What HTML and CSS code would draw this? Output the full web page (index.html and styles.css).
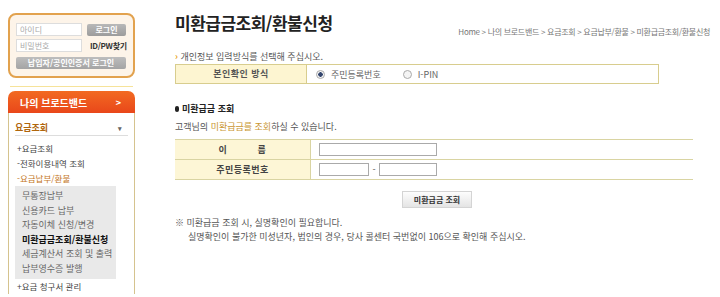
FILE: index.html
```html
<!DOCTYPE html>
<html lang="ko">
<head>
  <meta charset="UTF-8">
  <title>미환급금조회/환불신청</title>
  <link rel="stylesheet" href="styles.css">
</head>
<body>
  <div class="wrap">
    <!-- Left side -->
    <div class="side">
      <div class="login-box">
        <div class="login-row">
          <span class="login-input">아이디</span>
          <span class="login-btn">로그인</span>
        </div>
        <div class="login-row">
          <span class="login-input">비밀번호</span>
          <span class="login-find">ID/PW찾기</span>
        </div>
        <div class="login-cert">납입자/공인인증서 로그인</div>
      </div>
      <div class="side-line"></div>

      <div class="menu-head">
        <span>나의 브로드밴드</span>
        <span class="menu-arrow">&gt;</span>
      </div>
      <div class="menu-panel">
        <div class="menu-title">
          <span>요금조회</span>
          <span class="menu-caret">▾</span>
        </div>
        <ul class="menu-list first">
          <li>+요금조회</li>
          <li>-전화이용내역 조회</li>
          <li class="open">-요금납부/환불</li>
        </ul>
        <ul class="sub-list">
          <li>무통장납부</li>
          <li>신용카드 납부</li>
          <li>자동이체 신청/변경</li>
          <li class="current">미환급금조회/환불신청</li>
          <li>세금계산서 조회 및 출력</li>
          <li>납부영수증 발행</li>
        </ul>
        <ul class="menu-list">
          <li>+요금 청구서 관리</li>
        </ul>
      </div>
    </div>

    <!-- Main content -->
    <div class="main">
      <div class="page-head">
        <h1>미환급금조회/환불신청</h1>
        <div class="crumb">Home &gt; 나의 브로드밴드 &gt; 요금조회 &gt; 요금납부/환불 &gt; 미환급금조회/환불신청</div>
      </div>

      <p class="guide"><span class="guide-mark">›</span> 개인정보 입력방식를 선택해 주십시오.</p>
      <div class="method-box">
        <div class="method-label">본인확인 방식</div>
        <div class="method-opts">
          <span class="radio checked"></span><span class="opt-text">주민등록번호</span>
          <span class="radio"></span><span class="opt-text">I-PIN</span>
        </div>
      </div>

      <h2 class="sec-title"><span class="sec-mark"></span>미환급금 조회</h2>
      <p class="desc">고객님의 <span class="hl">미환급금를 조회</span>하실 수 있습니다.</p>

      <div class="form-table">
        <div class="form-row">
          <div class="form-label">이&nbsp;&nbsp;&nbsp;&nbsp;&nbsp;&nbsp;&nbsp;&nbsp;&nbsp;&nbsp;름</div>
          <div class="form-field"><span class="field long"></span></div>
        </div>
        <div class="form-row">
          <div class="form-label">주민등록번호</div>
          <div class="form-field">
            <span class="field short"></span>
            <span class="dash">-</span>
            <span class="field mid"></span>
          </div>
        </div>
      </div>

      <div class="btn-row"><span class="btn">미환급금 조회</span></div>

      <div class="notes">
        <p>※ 미환급금 조회 시, 실명확인이 필요합니다.</p>
        <p class="indent">실명확인이 불가한 미성년자, 법인의 경우, 당사 콜센터 국번없이 106으로 확인해 주십시오.</p>
      </div>
    </div>
  </div>
</body>
</html>
```

FILE: styles.css
```css
/* General Styles */
body {
  margin: 0;
  padding: 0;
  background: #fff;
  font-family: "Noto Sans CJK KR", "Noto Sans", sans-serif;
  font-size: 9px;
  color: #333;
}

p, h1, h2, ul {
  margin: 0;
  padding: 0;
}

ul {
  list-style: none;
}

.wrap {
  display: flex;
}

/* Side */
.side {
  width: 127px;
  margin-left: 8px;
  padding-top: 13px;
}

.login-box {
  box-sizing: border-box;
  height: 65px;
  padding: 8px 0 0 6px;
  border: 2px solid #e2a24e;
  border-radius: 8px;
  background: #fdf4e9;
}

.login-row {
  display: flex;
  align-items: center;
  margin-bottom: 3px;
}

.login-input {
  box-sizing: border-box;
  width: 66px;
  height: 13px;
  padding-left: 3px;
  border: 1px solid #ddd;
  background: #fff;
  color: #aaa;
  font-size: 8px;
  line-height: 11px;
}

.login-btn {
  width: 39px;
  height: 12px;
  margin-left: 5px;
  border-radius: 2px;
  background: linear-gradient(#b8b8b8, #9c9c9c);
  color: #fff;
  font-size: 8px;
  font-weight: bold;
  line-height: 12px;
  text-align: center;
}

.login-find {
  margin-left: 8px;
  color: #333;
  font-size: 8px;
  font-weight: bold;
  letter-spacing: -0.3px;
}

.login-cert {
  width: 110px;
  height: 12px;
  margin-top: 5px;
  border-radius: 2px;
  background: linear-gradient(#bdbdbd, #a4a4a4);
  color: #fff;
  font-size: 8px;
  font-weight: bold;
  line-height: 12px;
  text-align: center;
}

.side-line {
  height: 1px;
  margin: 8px 2px 0;
  background: #f6e39a;
}

.menu-head {
  display: flex;
  justify-content: space-between;
  align-items: center;
  height: 22px;
  margin-top: 4px;
  padding: 0 14px 0 12px;
  border-radius: 7px 7px 0 0;
  background: linear-gradient(#f26a22, #e9471a);
  color: #fff;
  font-size: 10px;
  font-weight: bold;
}

.menu-arrow {
  font-size: 9px;
}

.menu-panel {
  padding: 0 6px 0 6px;
  border-left: 1px solid #d5c38e;
  border-right: 1px solid #d5c38e;
}

.menu-title {
  display: flex;
  justify-content: space-between;
  box-sizing: border-box;
  height: 23px;
  padding: 9px 6px 0 0;
  border-bottom: 1px solid #ddd;
  color: #b0660c;
  font-weight: bold;
  line-height: 12px;
}

.menu-caret {
  color: #666;
  font-size: 7px;
}

.menu-list {
  padding-left: 2px;
  color: #444;
  font-size: 8.5px;
  line-height: 15px;
}

.menu-list.first {
  margin-top: 5px;
}

.menu-list .open {
  color: #c4761c;
}

.sub-list {
  width: 101px;
  margin: 0;
  padding: 3px 0 2px 7px;
  box-sizing: border-box;
  background: #e9e9e9;
  color: #666;
  line-height: 14.6px;
}

.sub-list .current {
  color: #111;
  font-weight: bold;
}

/* Main */
.main {
  width: 535px;
  margin-left: 40px;
}

.page-head {
  display: flex;
  justify-content: space-between;
  align-items: flex-end;
  height: 38px;
}

h1 {
  margin-bottom: 4px;
  color: #222;
  font-size: 17px;
  font-weight: bold;
  line-height: 22px;
  letter-spacing: -0.5px;
}

.crumb {
  color: #777;
  font-size: 8px;
  line-height: 12px;
  letter-spacing: -0.3px;
}

.guide {
  margin-top: 13px;
  color: #555;
  line-height: 12px;
}

.guide-mark {
  color: #e8a020;
  font-weight: bold;
}

.method-box {
  display: flex;
  width: 484px;
  height: 20px;
  margin-top: 1px;
  box-sizing: border-box;
  border: 1px solid #d8cd8e;
}

.method-label {
  width: 130px;
  border-right: 1px solid #d8cd8e;
  background: #fdf5d1;
  color: #555;
  font-weight: bold;
  line-height: 18px;
  text-align: center;
  letter-spacing: 0.5px;
}

.method-opts {
  display: flex;
  align-items: center;
  padding-left: 9px;
  color: #666;
}

.radio {
  box-sizing: border-box;
  width: 9px;
  height: 9px;
  border: 1px solid #aaa;
  border-radius: 50%;
  background: #f4f4f4;
}

.radio.checked {
  background: radial-gradient(circle, #34466e 0 2px, #f4f4f4 2.5px);
}

.opt-text {
  margin: 0 22px 0 6px;
}

.sec-title {
  display: flex;
  align-items: center;
  margin-top: 19px;
  color: #222;
  font-size: 9px;
  font-weight: bold;
  line-height: 12px;
}

.sec-mark {
  width: 4px;
  height: 6px;
  margin-right: 3px;
  border-radius: 2px;
  background: #222;
}

.desc {
  margin-top: 6px;
  color: #555;
  line-height: 12px;
}

.hl {
  color: #c99530;
}

.form-table {
  width: 518px;
  margin-top: 6px;
  border-top: 1px solid #d9d4a2;
}

.form-row {
  display: flex;
  height: 19px;
  border-bottom: 1px solid #d9d4a2;
}

.form-label {
  width: 135px;
  border-right: 1px solid #d9d4a2;
  background: #fdf6d6;
  color: #444;
  font-weight: bold;
  line-height: 19px;
  text-align: center;
  letter-spacing: 0.5px;
}

.form-field {
  display: flex;
  align-items: center;
  padding-left: 8px;
}

.field {
  box-sizing: border-box;
  height: 13px;
  border: 1px solid #aaa;
  background: #fff;
}

.field.long {
  width: 118px;
}

.field.short {
  width: 50px;
}

.field.mid {
  width: 58px;
}

.dash {
  width: 10px;
  color: #555;
  text-align: center;
}

.btn-row {
  margin-top: 11px;
  padding-left: 227px;
}

.btn {
  display: inline-block;
  width: 70px;
  height: 17px;
  box-sizing: border-box;
  border: 1px solid #d4d4d4;
  background: linear-gradient(#fdfdfd, #e4e4e4);
  color: #333;
  font-size: 8px;
  font-weight: bold;
  line-height: 15px;
  text-align: center;
}

.notes {
  margin-top: 8px;
  color: #555;
  line-height: 14px;
}

.notes .indent {
  padding-left: 13px;
}
```
